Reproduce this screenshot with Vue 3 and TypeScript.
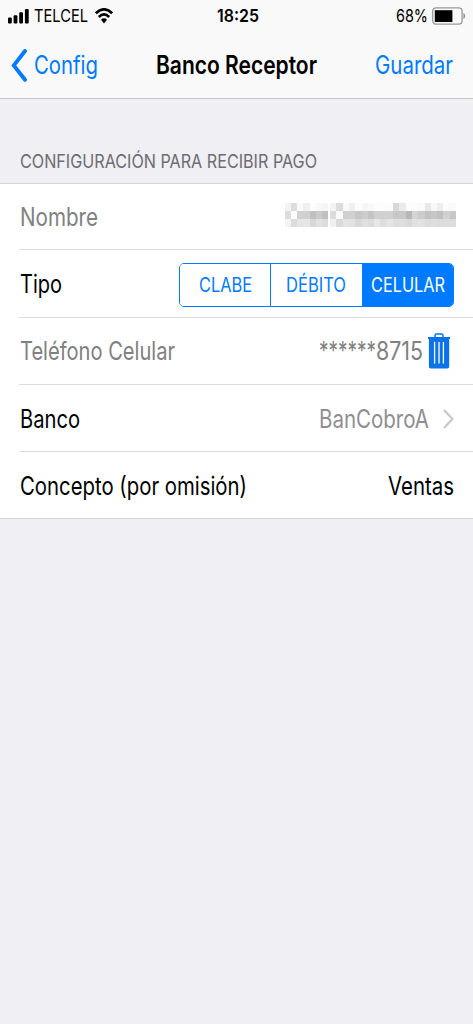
<template>
  <div class="screen">
    <header class="top">
      <div class="status">
        <div class="side">
          <svg class="signal" width="21" height="15" viewBox="0 0 21 15">
            <rect x="0" y="8.5" width="3.8" height="6" rx="1" />
            <rect x="5.6" y="6.3" width="3.8" height="8.2" rx="1" />
            <rect x="11.2" y="3.3" width="3.8" height="11.2" rx="1" />
            <rect x="16.9" y="0" width="3.8" height="14.5" rx="1" />
          </svg>
          <span v-fit="54" class="carrier">TELCEL</span>
          <svg class="wifi" width="18" height="16" viewBox="0 0 18 16" fill="none" stroke="#000">
            <path d="M0.9 5.3 Q9 -2.6 17.1 5.3" stroke-width="2.7" />
            <path d="M3.8 9 Q9 3.7 14.2 9" stroke-width="2.6" />
            <path d="M6 11.7 Q9 8.8 12 11.7 L9 15.4 Z" fill="#000" stroke="none" />
          </svg>
        </div>
        <div class="time"><span v-fit="42">18:25</span></div>
        <div class="side right">
          <span v-fit="32">68%</span>
          <svg class="battery" width="34" height="18" viewBox="0 0 34 18">
            <rect x="0.7" y="0.8" width="29.4" height="16.4" rx="3.4" fill="none" stroke="#999" stroke-width="1.3" />
            <rect x="2.8" y="3.2" width="17.6" height="11.8" fill="#000" />
            <path d="M31.4 5.8 Q33.3 7 33.3 9 Q33.3 11 31.4 12.2 Z" fill="#999" />
          </svg>
        </div>
      </div>
      <nav class="nav">
        <a class="back">
          <svg width="16" height="33" viewBox="0 0 16 33" fill="none" stroke="#007aff" stroke-width="3.9" stroke-linecap="round" stroke-linejoin="miter">
            <path d="M14 2 L2.8 16.4 L14 30.8" />
          </svg>
          <span v-fit="64">Config</span>
        </a>
        <h1><span v-fit="161">Banco Receptor</span></h1>
        <a class="save"><span v-fit="78">Guardar</span></a>
      </nav>
    </header>

    <h2 class="section"><span v-fit="297">CONFIGURACIÓN PARA RECIBIR PAGO</span></h2>

    <ul class="list">
      <li class="row first">
        <span v-fit="78" class="muted">Nombre</span>
        <svg class="redacted" width="172" height="24" viewBox="0 0 172 24" shape-rendering="crispEdges">
          <rect v-for="(c, i) in blocks" :key="i" :x="c.x" :y="c.y" :width="c.w" height="8" :fill="c.fill" />
        </svg>
      </li>
      <li class="row second">
        <span v-fit="42">Tipo</span>
        <div class="segmented">
          <button v-for="option in options" :key="option.label" type="button" :class="{ active: option.label === selected }" @click="selected = option.label">
            <span v-fit="option.width">{{ option.label }}</span>
          </button>
        </div>
      </li>
      <li class="row">
        <span v-fit="155" class="muted">Teléfono Celular</span>
        <div class="phone muted">
          <span v-fit="57" class="stars">******</span><span v-fit="47">8715</span>
          <svg class="trash" width="22" height="36" viewBox="0 0 22 36">
            <path d="M7 4 V2.5 Q7 1 8.5 1 H13.5 Q15 1 15 2.5 V4" fill="none" stroke="#0b72e7" stroke-width="1.5" />
            <path d="M0 3.9 H22 V5.9 H21.2 V33.5 Q21.2 35.5 19.2 35.5 H2.9 Q0.9 35.5 0.9 33.5 V5.9 H0 Z" fill="#0b72e7" />
            <path d="M6.6 9.5 V30 M11 9.5 V30 M15.4 9.5 V30" stroke="#fff" stroke-width="1.3" stroke-linecap="round" />
          </svg>
        </div>
      </li>
      <li class="row lower">
        <span v-fit="60">Banco</span>
        <div class="link">
          <span v-fit="110">BanCobroA</span>
          <svg width="11" height="20" viewBox="0 0 11 20" fill="none" stroke="#c7c7cc" stroke-width="2.2">
            <path d="M1 1 L9.4 10 L1 19" />
          </svg>
        </div>
      </li>
      <li class="row lower last">
        <span v-fit="227">Concepto (por omisión)</span>
        <span v-fit="66" class="concept">Ventas</span>
      </li>
    </ul>
  </div>
</template>

<script setup lang="ts">
import { ref } from 'vue';

const selected = ref('CELULAR');
const options = [
  { label: 'CLABE', width: 53 },
  { label: 'DÉBITO', width: 60 },
  { label: 'CELULAR', width: 74 },
];

// Condense a label horizontally to the given width
const vFit = {
  mounted(el: HTMLElement, { value }: { value: number }) {
    const natural = el.getBoundingClientRect().width;
    el.style.transform = `scaleX(${value / natural})`;
    el.style.marginRight = `${value - natural}px`;
  },
};

// Grey levels of the pixelated name, one string per line of blocks
const words = [
  { x: 0, w: 43, rows: ['f3 dc fa f0 fd f8 f5', 'dc fc d0 d0 c0 ca c0', 'f3 dc e6 e6 d8 e2 dc'] },
  {
    x: 45,
    w: 126,
    rows: [
      'f3 dc fa f0 fd f5 f8 fd fc fc d8 eb fd fc fa e8 f8 ee fb fa',
      'dc fa d0 d0 c6 cc c4 d0 d0 d0 c8 c8 b8 d4 cc c2 c6 c0 d0 c6',
      'f0 da e4 e2 d8 e0 dc e6 de e4 de de d8 e0 e2 dc de dc dd dd',
    ],
  },
];

const blocks = words.flatMap((word) =>
  word.rows.flatMap((row, y) => {
    const cells = row.split(' ');
    const w = word.w / cells.length;
    return cells.map((c, i) => ({ x: word.x + i * w, y: y * 8, w, fill: `#${c}${c}${c}` }));
  }),
);
</script>

<style>
body {
  margin: 0;
  background: #efeff4;
}
</style>

<style scoped>
.screen {
  width: 473px;
  height: 1024px;
  overflow: hidden;
  background: #efeff4;
  color: #000;
  font-family: Inter, "Liberation Sans", sans-serif;
  font-size: 25.3px;
  line-height: 32px;
}

span {
  display: inline-block;
  flex: none;
  white-space: nowrap;
  transform-origin: 0 50%;
}

svg {
  display: block;
  flex: none;
}

.top {
  box-sizing: border-box;
  height: 99px;
  background: #f9f9f9;
  border-bottom: 1px solid #c8c8cb;
}

.status {
  display: grid;
  grid-template-columns: 1fr 42px 1fr;
  align-items: center;
  height: 32px;
  padding: 0 7px 0 8px;
  font-size: 17.6px;
}

.side {
  display: flex;
  align-items: center;
}

.right {
  justify-content: flex-end;
}

.carrier {
  margin-left: 5px;
}

.wifi {
  margin-left: 7px;
}

.time {
  display: flex;
  margin-left: 1px;
  font-weight: 600;
}

.battery {
  margin-left: 4px;
}

.nav {
  display: grid;
  grid-template-columns: 1fr 161px 1fr;
  align-items: center;
  height: 66px;
  padding: 0 20px 0 11px;
}

.back,
.save {
  display: flex;
  align-items: center;
  color: #007aff;
}

.back {
  gap: 7px;
}

.save {
  justify-content: flex-end;
}

h1,
h2 {
  margin: 0;
  font-size: inherit;
  font-weight: 400;
}

h1 {
  display: flex;
  margin-left: 4px;
  font-weight: 600;
}

.section {
  display: flex;
  align-items: flex-end;
  height: 79px;
  padding: 0 19.5px 5px;
  color: #6d6d72;
  font-size: 18.8px;
}

.list {
  margin: 0;
  padding: 0;
  list-style: none;
  background: #fff;
  border-top: 1px solid #d4d4d8;
  border-bottom: 1px solid #d4d4d8;
}

.row {
  box-sizing: border-box;
  display: flex;
  align-items: center;
  justify-content: space-between;
  height: 67px;
  margin-left: 19px;
  padding-left: 0.5px;
  padding-right: 19px;
  border-bottom: 1px solid #dcdcde;
}

.first {
  height: 66px;
  padding-right: 16px;
}

.second {
  height: 68px;
}

.lower {
  padding-top: 2px;
}

.last {
  height: 66px;
  border-bottom: none;
}

.muted {
  color: #808080;
}

.redacted {
  margin-top: -4px;
}

.segmented {
  box-sizing: border-box;
  display: flex;
  width: 275px;
  height: 44px;
  margin-top: 2px;
  overflow: hidden;
  border: 1px solid #007aff;
  border-radius: 5px;
}

.segmented button {
  display: flex;
  flex: 1;
  align-items: center;
  justify-content: center;
  min-width: 0;
  padding: 0;
  border: 0;
  background: #fff;
  color: #007aff;
  font: inherit;
  font-size: 19.5px;
}

.segmented button + button {
  border-left: 1px solid #007aff;
}

.segmented button.active {
  background: #007aff;
  color: #fff;
}

.phone {
  display: flex;
  align-items: center;
  margin-right: 4px;
}

.trash {
  margin-left: 5px;
}

.link {
  display: flex;
  align-items: center;
  gap: 14px;
  color: #8e8e93;
}
</style>
